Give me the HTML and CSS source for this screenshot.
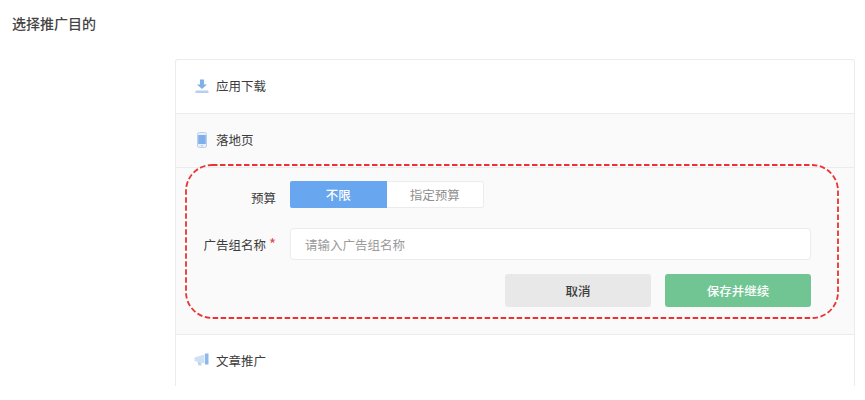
FILE: index.html
```html
<!DOCTYPE html>
<html lang="zh">
<head>
<meta charset="utf-8">
<title>选择推广目的</title>
<link rel="stylesheet" href="styles.css">
</head>
<body>
<h1 class="title">选择推广目的</h1>
<div class="panel">
  <div class="row">
    <svg class="icon" viewBox="0 0 14 14"><path d="M5 0.500h4v5h3L7 10 2 5.500h3z" fill="#7fb0ea"/><rect x="0.500" y="11.500" width="13" height="2.500" rx="0.600" fill="#b9cfee"/></svg>
    <span>应用下载</span>
  </div>
  <div class="row row-active">
    <svg class="icon icon-phone" viewBox="0 0 10 16"><rect x="0.500" y="0.500" width="9" height="15" rx="1.800" fill="#eaf0f9" stroke="#b9cfee"/><rect x="1.200" y="3" width="7.600" height="9" fill="#7fb0ea"/><circle cx="5" cy="13.800" r="0.800" fill="#9dbce6"/></svg>
    <span>落地页</span>
  </div>
  <div class="form">
    <div class="field field-budget">
      <label class="label label-budget">预算</label>
      <div class="segment">
        <div class="seg seg-on">不限</div>
        <div class="seg">指定预算</div>
      </div>
    </div>
    <div class="field field-name">
      <label class="label">广告组名称<i class="star">*</i></label>
      <input class="input" type="text" placeholder="请输入广告组名称">
    </div>
    <div class="actions">
      <button class="btn btn-cancel" type="button">取消</button>
      <button class="btn btn-save" type="button">保存并继续</button>
    </div>
    <svg class="dash" viewBox="0 0 654 155"><rect x="1" y="1" width="652" height="153" rx="26" fill="none" stroke="#ea3333" stroke-width="1.800" stroke-dasharray="5.500 2.500"/></svg>
  </div>
  <div class="row row-last">
    <svg class="icon icon-horn" viewBox="0 0 16 14"><path d="M0.500 4.500 10.500 1.500v9L0.500 8z" fill="#cfdff4"/><path d="M11 0.500h3.500v11H11z" fill="#8db8ec"/><path d="M3.500 8.500l3.800 1.300v2.700H4.500z" fill="#bdd2ef"/></svg>
    <span>文章推广</span>
  </div>
</div>
</body>
</html>
```
FILE: styles.css
```css
* { box-sizing: border-box; }
html, body { margin: 0; padding: 0; background: #fff; }
body {
  width: 865px;
  height: 400px;
  overflow: hidden;
  font-family: "Noto Sans CJK SC", "Liberation Sans", sans-serif;
  color: #3c3c3c;
  font-size: 12.500px;
}
.title {
  margin: 0;
  padding: 15px 0 0 12px;
  height: 59px;
  font-size: 14px;
  line-height: 17px;
  font-weight: 500;
  color: #444;
}
.panel {
  margin-left: 175px;
  width: 680px;
  height: 327px;
  border: 1px solid #ececec;
  border-bottom: 0;
  border-radius: 3px 3px 0 0;
}
.row {
  display: flex;
  align-items: center;
  gap: 7px;
  height: 54px;
  padding: 0 0 2px 19px;
  border-bottom: 1px solid #ececec;
}
.row-active { background: #fafafa; }
.row-last { border-bottom: 0; height: 52px; padding-left: 18px; }
.icon { width: 14px; height: 14px; flex: none; }
.icon-phone { width: 10px; height: 16px; margin: 0 2px 0 2px; }
.icon-horn { width: 16px; height: 14px; margin-right: -1px; }
.form {
  position: relative;
  height: 167px;
  padding: 13px 43px 0 0;
  background: #fafafa;
  border-bottom: 1px solid #ececec;
}
.field { display: flex; gap: 14px; }
.field-name { align-items: center; margin-top: 20px; }
.label {
  width: 100px;
  flex: none;
  text-align: right;
  color: #3c3c3c;
}
.label-budget { padding-top: 7px; line-height: 19px; }
.star { font-style: normal; font-size: 15px; line-height: 1; color: #e5484d; margin-left: 3px; }
.segment {
  display: flex;
  width: 194px;
  height: 27px;
  background: #fff;
  border: 1px solid #ececec;
  border-radius: 2px;
}
.seg {
  flex: 1;
  margin: -1px 0;
  display: flex;
  align-items: center;
  justify-content: center;
  color: #8f8f8f;
}
.seg:first-child { margin-left: -1px; }
.seg-on { background: #68a6f0; color: #fff; font-weight: 500; border-radius: 2px 0 0 2px; }
.input {
  flex: 1;
  height: 32px;
  min-width: 0;
  padding: 0 14px;
  border: 1px solid #ececec;
  border-radius: 3px;
  background: #fff;
  font: inherit;
  color: #3c3c3c;
}
.input::placeholder { color: #9a9a9a; opacity: 1; }
.actions {
  display: flex;
  justify-content: flex-end;
  gap: 14px;
  margin-top: 14px;
}
.btn {
  width: 146px;
  height: 33px;
  border: 0;
  border-radius: 3px;
  font: inherit;
  font-weight: 500;
}
.btn-cancel { background: #e8e8e8; color: #3c3c3c; }
.btn-save { background: #70c592; color: #fff; }
.dash {
  position: absolute;
  left: 9px;
  top: -4px;
  width: 654px;
  height: 155px;
}
```
